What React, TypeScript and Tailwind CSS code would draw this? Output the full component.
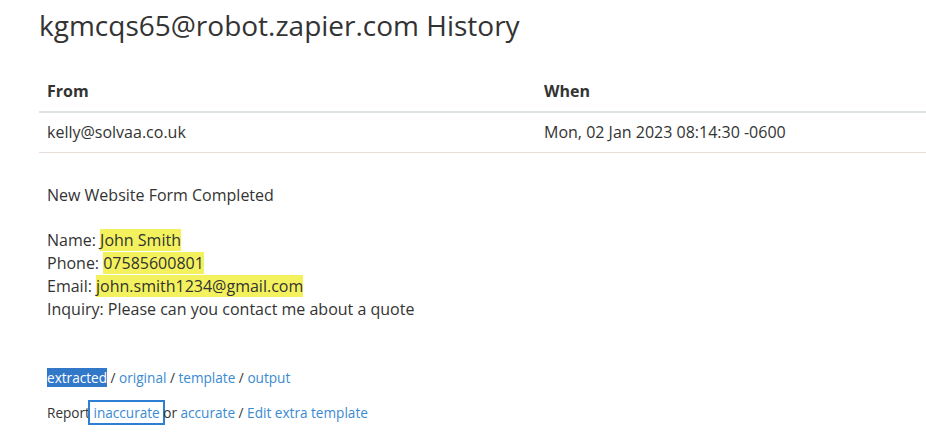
import React from 'react';

const rows = [{ from: 'kelly@solvaa.co.uk', when: 'Mon, 02 Jan 2023 08:14:30 -0600' }];

function Hl({ children }: { children: React.ReactNode }) {
  return <span className="bg-[#f3f25e]">{children}</span>;
}

export default function App() {
  return (
    <div className="min-h-[436px] bg-white pl-[39px] font-['Open_Sans',sans-serif] text-[#333]">
      <h1 className="pt-[6px] text-[28px] leading-[38px] text-[#333]">kgmcqs65@robot.zapier.com History</h1>

      <table className="mt-[28px] w-[887px] border-collapse text-left text-[16px] leading-[23px]">
        <thead>
          <tr className="border-b-2 border-[#dde3e5]">
            <th className="w-[497px] px-2 py-2 font-bold">From</th>
            <th className="px-2 py-2 font-bold">When</th>
          </tr>
        </thead>
        <tbody>
          {rows.map((r) => (
            <tr key={r.from} className="border-b border-[#e7dfd7]">
              <td className="px-2 py-2">{r.from}</td>
              <td className="px-2 py-2">{r.when}</td>
            </tr>
          ))}
        </tbody>
      </table>

      <div className="mt-[31px] pl-2 text-[16px] leading-[23px]">
        <p>New Website Form Completed</p>
        <p className="h-[22px]" />
        <p>
          Name: <Hl>John Smith</Hl>
        </p>
        <p>
          Phone: <Hl>07585600801</Hl>
        </p>
        <p>
          Email: <Hl>john.smith1234@gmail.com</Hl>
        </p>
        <p>Inquiry: Please can you contact me about a quote</p>
      </div>

      <div className="mt-[47px] pl-2 text-[13.6px] leading-[19px] text-[#333]">
        <p>
          <span className="bg-[#3278c8] text-white">extracted</span> /{' '}
          <a className="text-[#3a8ad2]">original</a> / <a className="text-[#3a8ad2]">template</a> /{' '}
          <a className="text-[#3a8ad2]">output</a>
        </p>
        <p className="mt-[16px]">
          Report{' '}
          <a className="-mx-[5px] border-2 border-[#2e7fd3] px-[3px] py-[1px] text-[#3a8ad2]">inaccurate</a> or{' '}
          <a className="text-[#3a8ad2]">accurate</a> / <a className="text-[#3a8ad2]">Edit extra template</a>
        </p>
      </div>
    </div>
  );
}
